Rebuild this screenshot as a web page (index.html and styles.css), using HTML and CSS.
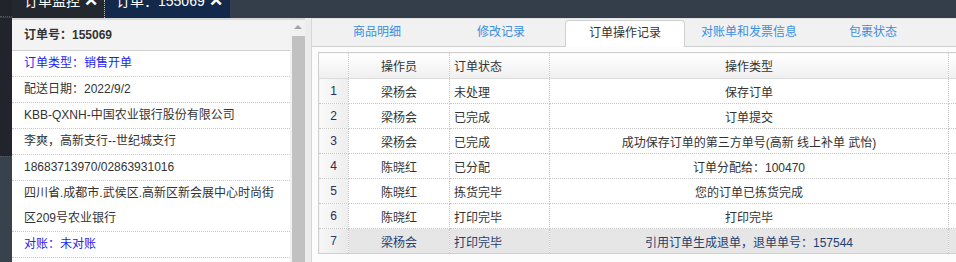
FILE: index.html
```html
<!DOCTYPE html>
<html lang="zh-CN">
<head>
    <meta charset="UTF-8">
    <title>订单：155069</title>
    <link rel="stylesheet" href="styles.css">
</head>
<body>
    <div class="topbar">
        <div class="side-top"></div>
        <div class="top-tab tab-monitor"><span>订单监控 <b class="close">&#10005;</b></span></div>
        <div class="top-tab tab-order"><span>订单：155069 <b class="close">&#10005;</b></span></div>
    </div>

    <div class="main">
        <div class="sidebar"><div class="sidebar-low"></div></div>

        <div class="left-panel">
            <div class="info">
                <div class="info-head">订单号：155069</div>
                <div class="info-row blue">订单类型：销售开单</div>
                <div class="info-row">配送日期：2022/9/2</div>
                <div class="info-row">KBB-QXNH-中国农业银行股份有限公司</div>
                <div class="info-row">李爽，高新支行--世纪城支行</div>
                <div class="info-row">18683713970/02863931016</div>
                <div class="info-row">四川省.成都市.武侯区.高新区新会展中心时尚街区209号农业银行</div>
                <div class="info-row blue">对账：未对账</div>
                <div class="info-row"></div>
            </div>
            <div class="scrollbar">
                <div class="scroll-arrow"></div>
                <div class="scroll-thumb"></div>
            </div>
        </div>

        <div class="splitter"></div>

        <div class="right-panel">
            <div class="tabs">
                <div class="tab">商品明细</div>
                <div class="tab">修改记录</div>
                <div class="tab active">订单操作记录</div>
                <div class="tab">对账单和发票信息</div>
                <div class="tab">包裹状态</div>
            </div>
            <div class="grid-wrap">
                <table class="grid">
                    <colgroup>
                        <col class="c-num"><col class="c-op"><col class="c-status"><col class="c-type"><col class="c-more">
                    </colgroup>
                    <thead>
                        <tr><th class="num"></th><th>操作员</th><th class="left">订单状态</th><th>操作类型</th><th></th></tr>
                    </thead>
                    <tbody>
                        <tr><td class="num">1</td><td>梁杨会</td><td class="left">未处理</td><td>保存订单</td><td></td></tr>
                        <tr><td class="num">2</td><td>梁杨会</td><td class="left">已完成</td><td>订单提交</td><td></td></tr>
                        <tr><td class="num">3</td><td>梁杨会</td><td class="left">已完成</td><td>成功保存订单的第三方单号(高新 线上补单 武怡)</td><td></td></tr>
                        <tr><td class="num">4</td><td>陈晓红</td><td class="left">已分配</td><td>订单分配给：100470</td><td></td></tr>
                        <tr><td class="num">5</td><td>陈晓红</td><td class="left">拣货完毕</td><td>您的订单已拣货完成</td><td></td></tr>
                        <tr><td class="num">6</td><td>陈晓红</td><td class="left">打印完毕</td><td>打印完毕</td><td></td></tr>
                        <tr class="selected"><td class="num">7</td><td>梁杨会</td><td class="left">打印完毕</td><td>引用订单生成退单，退单单号：157544</td><td></td></tr>
                    </tbody>
                </table>
            </div>
        </div>
    </div>
</body>
</html>
```

FILE: styles.css
```css
html, body { margin: 0; padding: 0; }
body { width: 956px; height: 262px; overflow: hidden; font-family: "Liberation Sans", "Noto Sans CJK SC", sans-serif; font-size: 12px; color: #333; background: #fff; }

.topbar { display: flex; height: 18px; background: #343e4a; overflow: hidden; }
.side-top { width: 12px; background: #21252b; border-bottom: 1px dotted #555; box-sizing: border-box; height: 17px; }
.top-tab { height: 18px; overflow: hidden; color: #fff; font-size: 14px; }
.top-tab span { display: block; line-height: 16px; margin-top: -7px; white-space: nowrap; }
.top-tab .close { font-size: 17px; font-weight: bold; }
.tab-monitor { width: 93px; background: #23272e; padding-left: 12px; box-sizing: border-box; border-right: 1px dotted #bbb; }
.tab-order { width: 125px; background: #13294b; padding-left: 11px; box-sizing: border-box; }

.main { display: flex; height: 244px; overflow: hidden; }
.sidebar { width: 12px; background: #21252b; display: flex; flex-direction: column; justify-content: flex-end; }
.sidebar-low { height: 105px; background: #38424c; border-top: 1px dotted #555; }

.left-panel { display: flex; width: 293px; border-top: 2px solid #d8d8d8; box-sizing: border-box; background: #fff; overflow: hidden; }
.info { width: 278px; }
.info-head { height: 30px; line-height: 30px; padding-left: 12px; background: #f3f3f3; border-bottom: 1px solid #cfcfcf; font-weight: bold; }
.info-row { min-height: 25px; line-height: 25px; padding: 0 6px 0 12px; border-bottom: 1px dotted #c8c8c8; }
.info-row.blue { color: #2323f0; }

.scrollbar { width: 15px; background: #f1f1f1; display: flex; flex-direction: column; align-items: center; }
.scroll-arrow { margin-top: 5px; width: 0; height: 0; border-left: 4px solid transparent; border-right: 4px solid transparent; border-bottom: 4px solid #a3a3a3; }
.scroll-thumb { margin-top: 7px; width: 13px; margin-left: 1px; flex: 1; background: #c1c1c1; }

.splitter { width: 7px; background: #ececec; border-right: 1px solid #d6d6d6; box-sizing: border-box; }

.right-panel { flex: 1; background: #fcfcfc; overflow: hidden; }
.tabs { display: flex; gap: 4px; height: 29px; padding-left: 5px; background: #f1f1f1; border-top: 1px solid #e2e2e2; border-bottom: 1px solid #cfcfcf; box-sizing: border-box; align-items: flex-end; }
.tab { width: 120px; height: 26px; line-height: 24px; text-align: center; color: #3a8ee0; font-size: 12px; box-sizing: border-box; }
.tab.active { background: #fff; color: #333; border: 1px solid #cfcfcf; border-bottom: none; border-radius: 4px 4px 0 0; height: 27px; margin-bottom: -1px; }

.grid-wrap { padding: 5px 0 0 6px; }
.grid { border-collapse: collapse; table-layout: fixed; width: 730px; border: 1px solid #cfcfcf; }
.c-num { width: 30px; }
.c-op { width: 101px; }
.c-status { width: 100px; }
.c-type { width: 399px; }
.c-more { width: 100px; }
.grid th, .grid td { border: 1px dotted #c8c8c8; text-align: center; white-space: nowrap; overflow: hidden; padding: 0 4px; font-weight: normal; }
.grid th { height: 25px; background: linear-gradient(#ffffff, #efefef); border-bottom: 1px solid #dcdcdc; }
.grid td { height: 24px; background: #fff; }
.grid .left { text-align: left; }
.grid td.num { background: linear-gradient(90deg, #f9f9f9, #eeeeee); color: #2b2b55; }
.grid tr.selected td { background: #e6e6e6; color: #1f3f70; }
.grid tr.selected td.num { background: linear-gradient(90deg, #f6f6f6, #e9e9e9); }
```
